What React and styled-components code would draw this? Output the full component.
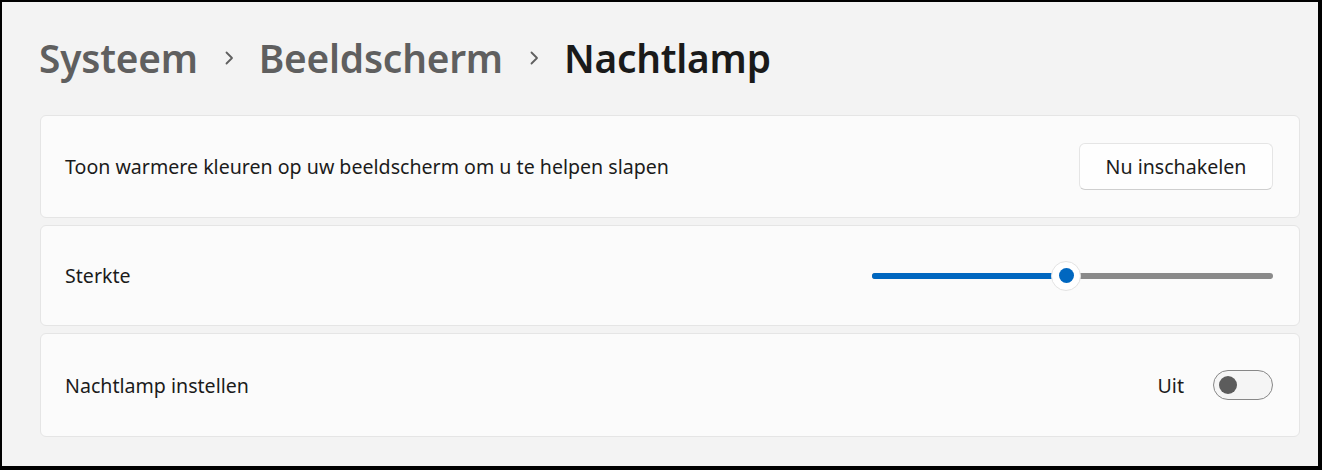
import React from "react";
import styled, { createGlobalStyle } from "styled-components";

const GlobalStyle = createGlobalStyle`
  body {
    margin: 0;
    font-family: "Noto Sans", "Open Sans", sans-serif;
    color: #1b1b1b;
  }
`;

const Frame = styled.div`
  width: 1322px;
  height: 470px;
  box-sizing: border-box;
  border-style: solid;
  border-color: #000;
  border-width: 2px 4px 4px 2px;
  background: #f3f3f3;
  padding: 22px 18px 0 38px;
  overflow: hidden;
`;

const Breadcrumb = styled.div`
  display: flex;
  align-items: center;
  gap: 26px;
  height: 68px;
  margin-bottom: 23px;
`;

const Crumb = styled.span`
  font-size: 38.8px;
  font-weight: 600;
  letter-spacing: -0.2px;
  margin-left: -1px;
  color: ${(p) => (p.$current ? "#1a1a1a" : "#5f5f5f")};
`;

const Chevron = () => (
  <svg width="10" height="14" viewBox="0 0 10 14" fill="none">
    <path d="M2.5 1.5 L8 7 L2.5 12.5" stroke="#5f5f5f" strokeWidth="1.8" strokeLinecap="round" strokeLinejoin="round" />
  </svg>
);

const Cards = styled.div`
  display: flex;
  flex-direction: column;
  gap: 7px;
`;

const Card = styled.div`
  box-sizing: border-box;
  height: ${(p) => p.$h || 102}px;
  display: flex;
  align-items: center;
  justify-content: space-between;
  padding: 0 26px 0 24px;
  background: #fbfbfb;
  border: 1px solid #e5e5e5;
  border-radius: 6px;
`;

const Label = styled.span`
  font-size: 19.6px;
  color: #1b1b1b;
`;

const Button = styled.button`
  box-sizing: border-box;
  width: 194px;
  height: 47px;
  background: #fefefe;
  border: 1px solid #e5e5e5;
  border-bottom-color: #cfcfcf;
  border-radius: 6px;
  font-family: inherit;
  font-size: 19.6px;
  color: #1b1b1b;
  padding: 0;
`;

const Slider = styled.div`
  position: relative;
  width: 401px;
  height: 30px;
`;

const Track = styled.div`
  position: absolute;
  left: 0;
  right: 0;
  top: 12px;
  height: 6px;
  border-radius: 3px;
  background: #8a8a8a;
`;

const Fill = styled.div`
  position: absolute;
  left: 0;
  top: 12px;
  height: 6px;
  border-radius: 3px;
  background: #0067c0;
`;

const Thumb = styled.div`
  position: absolute;
  top: 0;
  width: 30px;
  height: 30px;
  margin-left: -15px;
  box-sizing: border-box;
  border-radius: 50%;
  background: #fff;
  border: 1px solid #e3e3e3;
  display: flex;
  align-items: center;
  justify-content: center;
  &::after {
    content: "";
    width: 15px;
    height: 15px;
    border-radius: 50%;
    background: #0067c0;
  }
`;

const Right = styled.div`
  display: flex;
  align-items: center;
  gap: 29px;
`;

const Toggle = styled.div`
  box-sizing: border-box;
  width: 60px;
  height: 30px;
  border: 1.5px solid #878787;
  border-radius: 15px;
  background: #f5f5f5;
  display: flex;
  align-items: center;
  padding-left: 5px;
  &::after {
    content: "";
    width: 18px;
    height: 18px;
    border-radius: 50%;
    background: #5c5c5c;
  }
`;

export default function App() {
  const value = 48.4;
  return (
    <>
      <GlobalStyle />
      <Frame>
        <Breadcrumb>
          <Crumb>Systeem</Crumb>
          <Chevron />
          <Crumb>Beeldscherm</Crumb>
          <Chevron />
          <Crumb $current>Nachtlamp</Crumb>
        </Breadcrumb>
        <Cards>
          <Card $h={103}>
            <Label>Toon warmere kleuren op uw beeldscherm om u te helpen slapen</Label>
            <Button>Nu inschakelen</Button>
          </Card>
          <Card $h={101}>
            <Label>Sterkte</Label>
            <Slider>
              <Track />
              <Fill style={{ width: `${value}%` }} />
              <Thumb style={{ left: `${value}%` }} />
            </Slider>
          </Card>
          <Card $h={104}>
            <Label>Nachtlamp instellen</Label>
            <Right>
              <Label>Uit</Label>
              <Toggle />
            </Right>
          </Card>
        </Cards>
      </Frame>
    </>
  );
}
